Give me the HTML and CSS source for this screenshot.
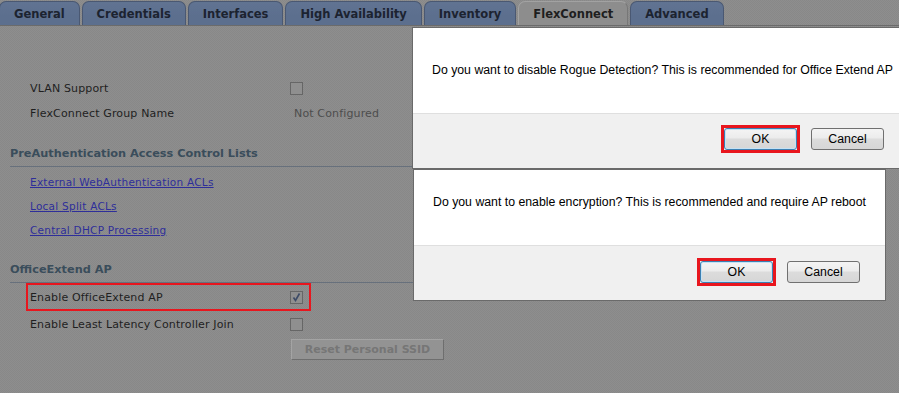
FILE: index.html
```html
<!DOCTYPE html>
<html lang="en">
<head>
    <meta charset="UTF-8">
    <meta name="viewport" content="width=device-width, initial-scale=1.0">
    <title>AP Details - FlexConnect</title>
    <link rel="stylesheet" href="styles.css">
</head>
<body>
    <ul class="tabs">
        <li class="tab">General</li>
        <li class="tab">Credentials</li>
        <li class="tab">Interfaces</li>
        <li class="tab">High Availability</li>
        <li class="tab">Inventory</li>
        <li class="tab active">FlexConnect</li>
        <li class="tab">Advanced</li>
    </ul>

    <div class="content">
        <div class="fields">
            <div class="field">
                <span class="label">VLAN Support</span>
                <span class="checkbox"></span>
            </div>
            <div class="field">
                <span class="label">FlexConnect Group Name</span>
                <span class="value">Not Configured</span>
            </div>
        </div>

        <h3 class="section-title">PreAuthentication Access Control Lists</h3>
        <ul class="links">
            <li><a href="#">External WebAuthentication ACLs</a></li>
            <li><a href="#">Local Split ACLs</a></li>
            <li><a href="#">Central DHCP Processing</a></li>
        </ul>

        <h3 class="section-title">OfficeExtend AP</h3>
        <div class="fields fields-oeap">
            <div class="field marked">
                <span class="label">Enable OfficeExtend AP</span>
                <span class="checkbox checked">
                    <svg viewBox="0 0 11 11" width="11" height="11"><path d="M2.5 5.5 L4.5 8.5 L8.5 1.5" fill="none" stroke="#3c4a66" stroke-width="1.6"/></svg>
                </span>
            </div>
            <div class="field">
                <span class="label">Enable Least Latency Controller Join</span>
                <span class="checkbox"></span>
            </div>
        </div>
        <button class="reset-btn" disabled>Reset Personal SSID</button>
    </div>

    <!-- confirm popups -->
    <div class="dialog dialog-rogue">
        <div class="dialog-body">Do you want to disable Rogue Detection? This is recommended for Office Extend AP</div>
        <div class="dialog-footer">
            <span class="mark-box"><button class="dlg-btn default">OK</button></span>
            <button class="dlg-btn">Cancel</button>
        </div>
    </div>

    <div class="dialog dialog-encrypt">
        <div class="dialog-body">Do you want to enable encryption? This is recommended and require AP reboot</div>
        <div class="dialog-footer">
            <span class="mark-box"><button class="dlg-btn default">OK</button></span>
            <button class="dlg-btn">Cancel</button>
        </div>
    </div>
</body>
</html>
```

FILE: styles.css
```css
* {
    margin: 0;
    padding: 0;
    box-sizing: border-box;
}

:root {
    --page: #8b8b8b;
    --tab: #5c6f8e;
    --tab-border: #4a5872;
    --text: #1f1f1f;
    --heading: #3a4d5b;
    --link: #2e2e9a;
    --mark: #e8161e;
}

body {
    position: relative;
    width: 899px;
    height: 393px;
    overflow: hidden;
    font-family: 'DejaVu Sans', Verdana, sans-serif;
    color: var(--text);
    background-color: var(--page);
    background-image: repeating-conic-gradient(#8e8e8e 0 25%, #888 0 50%);
    background-size: 2px 2px;
}

/* tab strip */
.tabs {
    display: flex;
    gap: 2px;
    list-style: none;
    height: 26px;
    margin-left: -1px;
    border-bottom: 1px solid #6b6b6b;
}

.tab {
    margin-top: 1px;
    height: 24px;
    padding: 0 14px;
    line-height: 24px;
    font-size: 11.5px;
    font-weight: bold;
    color: #1c2330;
    background: linear-gradient(#6678977a, transparent 60%), var(--tab);
    border: 1px solid var(--tab-border);
    border-bottom: none;
    border-radius: 7px 7px 0 0;
}

.tab.active {
    color: #1e1e1e;
    background: #8d8d8d;
    border-color: #a2a2a2 #777 #777 #a2a2a2;
}

/* main form */
.content {
    padding-top: 52px;
}

.fields {
    display: flex;
    flex-direction: column;
    gap: 5px;
}

.field {
    display: grid;
    grid-template-columns: 260px 1fr;
    align-items: center;
    width: 277px;
    height: 20px;
    margin-left: 30px;
    font-size: 11px;
    letter-spacing: 0.15px;
    white-space: nowrap;
}

.field .value {
    padding-left: 4px;
    color: #4d4d4d;
}

.field.marked {
    outline: 2px solid var(--mark);
    outline-offset: 2px;
}

.checkbox {
    display: flex;
    align-items: center;
    justify-content: center;
    width: 13px;
    height: 13px;
    border: 1px solid #666;
    background: #8f8f8f;
}

.section-title {
    margin: 21px 18px 0 10px;
    padding-bottom: 2px;
    line-height: 20px;
    font-size: 11.3px;
    font-weight: bold;
    color: var(--heading);
    border-bottom: 1px solid #67707c;
}

.links {
    list-style: none;
    padding: 3px 0 0 30px;
}

.links li {
    line-height: 24px;
    font-size: 10.5px;
    letter-spacing: 0.25px;
}

.links a {
    color: var(--link);
}

.links + .section-title {
    margin-top: 18px;
}

.fields-oeap {
    margin-top: 4px;
    gap: 7px;
}

.reset-btn {
    display: block;
    width: 153px;
    height: 21px;
    margin: 5px 0 0 291px;
    font-family: inherit;
    font-size: 11px;
    font-weight: bold;
    color: #767676;
    background: #939393;
    border: 1px solid;
    border-color: #a4a4a4 #6e6e6e #6e6e6e #a4a4a4;
}

/* confirm popups */
.dialog {
    position: absolute;
    display: flex;
    flex-direction: column;
    font-family: 'Liberation Sans', Arial, sans-serif;
    font-size: 12.3px;
    color: #000;
    background: #f0f0f0;
    border: 1px solid #6a6a6a;
}

.dialog-rogue {
    left: 412px;
    top: 27px;
    width: 492px;
    height: 142px;
}

.dialog-encrypt {
    left: 413px;
    top: 169px;
    width: 473px;
    height: 132px;
}

.dialog-body {
    display: flex;
    align-items: center;
    padding-left: 19px;
    background: #fff;
    border-bottom: 1px solid #dfdfdf;
}

.dialog-rogue .dialog-body {
    height: 86px;
    padding-bottom: 1px;
}

.dialog-encrypt .dialog-body {
    height: 76px;
    padding-bottom: 12px;
}

.dialog-footer {
    display: flex;
    justify-content: flex-end;
    align-items: flex-start;
    gap: 14px;
    padding-top: 14px;
}

.dialog-rogue .dialog-footer {
    padding-right: 19px;
}

.dialog-encrypt .dialog-footer {
    padding-top: 15px;
    padding-right: 25px;
}

.dlg-btn {
    display: block;
    width: 73px;
    height: 22px;
    font-family: inherit;
    font-size: 12.3px;
    color: #000;
    background: linear-gradient(#f4f4f4, #ececec 45%, #dcdcdc 50%, #d6d6d6);
    border: 1px solid #707070;
    border-radius: 3px;
}

.dlg-btn.default {
    border-color: #3c7fb1;
    box-shadow: inset 0 0 0 1px #c5e2f5;
}

/* red annotation round the OK buttons */
.mark-box {
    margin: -3px;
    border: 3px solid var(--mark);
}
```
